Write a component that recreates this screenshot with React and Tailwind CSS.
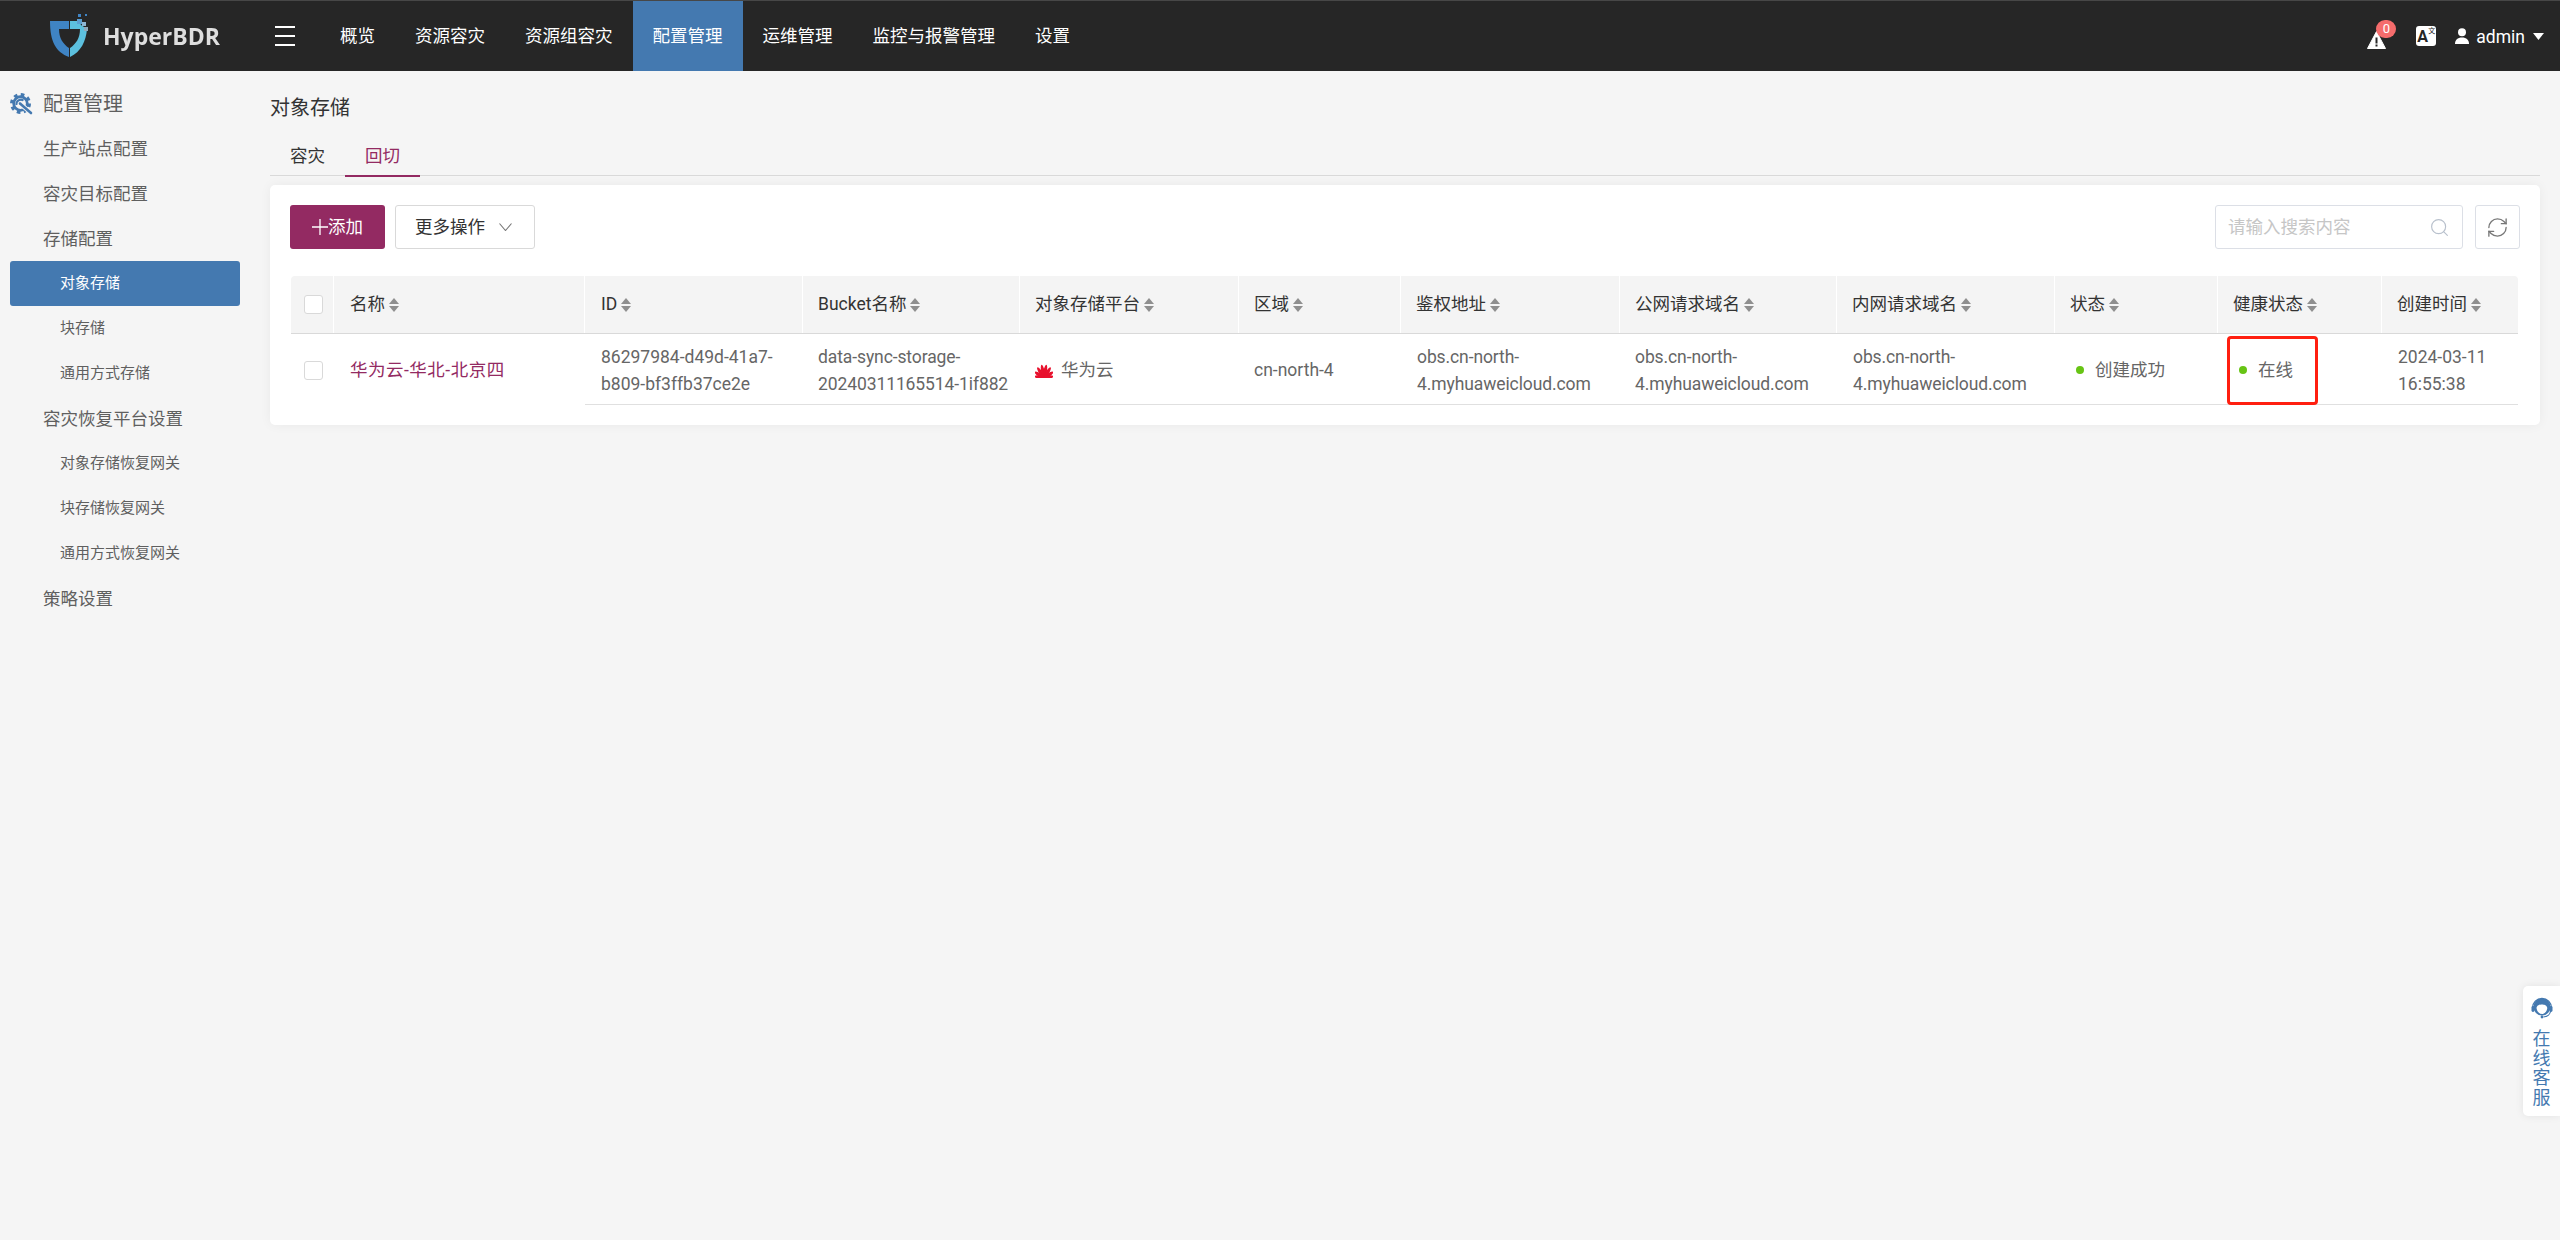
import { RefreshCw, Search } from 'lucide-react';

const navItems = ['概览', '资源容灾', '资源组容灾', '配置管理', '运维管理', '监控与报警管理', '设置'];

const sideItems = [
  { label: '生产站点配置' },
  { label: '容灾目标配置' },
  { label: '存储配置' },
  { label: '对象存储', sub: true, active: true },
  { label: '块存储', sub: true },
  { label: '通用方式存储', sub: true },
  { label: '容灾恢复平台设置' },
  { label: '对象存储恢复网关', sub: true },
  { label: '块存储恢复网关', sub: true },
  { label: '通用方式恢复网关', sub: true },
  { label: '策略设置' },
];

const columns = ['名称', 'ID', 'Bucket名称', '对象存储平台', '区域', '鉴权地址', '公网请求域名', '内网请求域名', '状态', '健康状态', '创建时间'];

const gridCols = 'grid grid-cols-[43px_251px_218px_217px_219px_162px_219px_217px_218px_163px_164px_136px]';

function SortIcon() {
  return (
    <svg width="10" height="14" viewBox="0 0 10 14" className="ml-[4px] shrink-0" fill="#8f8f8f">
      <path d="M5 0 10 6H0z" />
      <path d="M5 14 10 8H0z" />
    </svg>
  );
}

function Checkbox() {
  return <span className="block w-[19px] h-[19px] bg-white border border-[#d9d9d9] rounded-[3px]" />;
}

function Logo() {
  return (
    <svg width="42" height="44" viewBox="0 0 42 44" className="shrink-0">
      <path d="M1 7h19v8h-10c0 9 4 15 10 19v9C7 38 1 28 1 7z" fill="#3f84c4" />
      <path d="M21 43V34c6-4 10-10 10-19l-10 0v-8h9l2 4 6 4c-1 12-6 23-17 28z" fill="#5cc0de" />
      <rect x="28" y="5" width="5" height="5" fill="#5b9fd0" />
      <rect x="33" y="8" width="4" height="4" fill="#8fb7d4" />
      <rect x="35" y="13" width="4" height="4" fill="#8fa9bb" />
      <rect x="29" y="0" width="3" height="3" fill="#3f84c4" />
      <rect x="36" y="0" width="2" height="2" fill="#3f84c4" />
    </svg>
  );
}

function GearIcon() {
  return (
    <svg width="24" height="22" viewBox="0 0 24 22" className="shrink-0">
      <circle cx="10.5" cy="10.5" r="9" fill="none" stroke="#4479b0" strokeWidth="3" strokeDasharray="3.6 3.47" />
      <circle cx="10.5" cy="10.5" r="6.8" fill="none" stroke="#4479b0" strokeWidth="2.8" />
      <path d="M6.5 12a4.5 4.5 0 0 1 7-4.5" fill="none" stroke="#4479b0" strokeWidth="2" />
      <path d="M10 10.5l11 9.5" stroke="#f5f5f5" strokeWidth="4.4" />
      <path d="M10 10.5l11 9.5" stroke="#4479b0" strokeWidth="2.6" strokeLinecap="round" />
    </svg>
  );
}

function HuaweiIcon() {
  const petals = [
    [-80, 9.5],
    [-56, 11],
    [-32, 12.5],
    [-10, 13.5],
    [10, 13.5],
    [32, 12.5],
    [56, 11],
    [80, 9.5],
  ];
  return (
    <svg width="18" height="14" viewBox="0 0 18 14" className="shrink-0">
      {petals.map(([a, len]) => (
        <ellipse key={a} cx="9" cy={14 - len / 2} rx="1.7" ry={len / 2} fill="#e8112d" transform={`rotate(${a} 9 14)`} />
      ))}
    </svg>
  );
}

function HeadsetIcon() {
  return (
    <svg width="22" height="22" viewBox="0 0 22 22">
      <circle cx="11" cy="10" r="8.6" fill="#4479b0" />
      <path d="M5.5 11c.5-3 3-3.5 5.5-3.5 2 0 4.8.6 5.3 3.5-.5 3.5-2.6 6-5.3 6s-5-2.5-5.5-6z" fill="#fff" />
      <path d="M1.5 11a9.5 9.5 0 0 1 19 0" fill="none" stroke="#4479b0" strokeWidth="1.3" />
      <rect x="0.5" y="9" width="3" height="6" rx="1.4" fill="#4479b0" />
      <rect x="18.5" y="9" width="3" height="6" rx="1.4" fill="#4479b0" />
      <path d="M19.5 14c0 3-3 5.5-7 6" fill="none" stroke="#4479b0" strokeWidth="1.2" />
      <circle cx="11" cy="20" r="1.4" fill="#4479b0" />
    </svg>
  );
}

function StatusCell({ label }) {
  return (
    <div className="flex items-center pl-[21px] pt-[2px] text-[#666]">
      <span className="w-[8px] h-[8px] rounded-full bg-[#67c414] mr-[11px] shrink-0" />
      {label}
    </div>
  );
}

function App() {
  return (
    <div className="relative min-h-[1240px] bg-[#f5f5f5] text-[17.5px] [font-family:Roboto,'Noto_Sans_CJK_SC',sans-serif]">
      <header className="h-[71px] bg-[#262626] border-t border-[#474747] flex items-stretch text-white">
        <div className="w-[275px] pl-[49px] flex items-center shrink-0">
          <Logo />
          <span className="ml-[12px] text-[23px] leading-none font-bold text-[#dedede] blur-[0.5px] [font-family:'Open_Sans',sans-serif]">
            HyperBDR
          </span>
        </div>
        <div className="w-[45px] flex flex-col justify-center shrink-0">
          <span className="block w-[20px] h-[2px] bg-white" />
          <span className="block w-[20px] h-[2px] bg-white mt-[7px]" />
          <span className="block w-[20px] h-[2px] bg-white mt-[7px]" />
        </div>
        <nav className="flex">
          {navItems.map((item) => (
            <div key={item} className={`px-[20px] flex items-center ${item === '配置管理' ? 'bg-[#4479b0]' : ''}`}>
              {item}
            </div>
          ))}
        </nav>
        <div className="ml-auto flex items-center pr-[16px]">
          <div className="relative w-[20px] h-[20px] mr-[29px] mt-[10px]">
            <svg width="19" height="18" viewBox="0 0 19 18">
              <path d="M9.5 0.5 18.5 17.5H.5z" fill="#fff" stroke="#fff" strokeLinejoin="round" />
              <path d="M9.5 6.5v6" stroke="#262626" strokeWidth="2" />
              <rect x="8.5" y="13.5" width="2" height="2" fill="#262626" />
            </svg>
            <span className="absolute left-[9px] top-[-11px] w-[20px] h-[18px] rounded-full bg-[#f56c6c] text-white text-[13px] leading-[18px] text-center">
              0
            </span>
          </div>
          <div className="relative w-[20px] h-[20px] bg-white rounded-[3px] text-[#262626] mr-[19px]">
            <span className="absolute left-[1px] top-[3px] text-[16px] leading-none font-bold">A</span>
            <span className="absolute right-[1px] top-[2px] text-[7px] leading-none">文</span>
          </div>
          <svg width="14" height="16" viewBox="0 0 14 16" fill="#fff" className="mr-[7px]">
            <circle cx="7" cy="4.2" r="4" />
            <path d="M0 16c0-4 2.5-6.5 7-6.5s7 2.5 7 6.5z" />
          </svg>
          <span className="mt-[2px]">admin</span>
          <svg width="11" height="7" viewBox="0 0 11 7" fill="#fff" className="ml-[8px]">
            <path d="M0 0h11L5.5 7z" />
          </svg>
        </div>
      </header>

      <div className="flex">
        <aside className="w-[250px] shrink-0 px-[10px] pt-[10px] text-[#5f5f5f]">
          <div className="h-[45px] flex items-center text-[20px] pt-px">
            <GearIcon />
            <span className="ml-[9px]">配置管理</span>
          </div>
          {sideItems.map((item) => (
            <div
              key={item.label}
              className={`h-[45px] flex items-center rounded-[3px] ${item.sub ? 'pl-[50px] text-[15px]' : 'pl-[33px] pt-px'} ${item.active ? 'bg-[#4479b0] text-white' : ''}`}
            >
              {item.label}
            </div>
          ))}
        </aside>

        <main className="flex-1 px-[20px] pt-[22px]">
          <h1 className="text-[20px] leading-[30px] font-normal text-[#333]">对象存储</h1>
          <div className="flex mt-[14px] h-[39px] border-b border-[#d9d9d9]">
            <div className="w-[75px] flex items-center justify-center text-[#333]">容灾</div>
            <div className="w-[75px] flex items-center justify-center text-[#932a62] border-b-2 border-[#932a62] h-[40px]">回切</div>
          </div>

          <section className="mt-[9px] bg-white rounded-[5px] px-[20px] pt-[20px] pb-[20px] h-[240px] shadow-[0_0_12px_rgba(0,0,0,0.05)]">
            <div className="flex items-center h-[44px]">
              <button className="w-[95px] h-[44px] bg-[#932a62] text-white rounded-[3px] flex items-center justify-center">
                <svg width="16" height="16" viewBox="0 0 16 16" stroke="#fff" strokeWidth="1.3" className="shrink-0">
                  <path d="M0 8h16M8 0v16" />
                </svg>
                添加
              </button>
              <button className="ml-[10px] w-[140px] h-[44px] bg-white border border-[#d9d9d9] rounded-[3px] text-[#333] flex items-center pl-[19px]">
                更多操作
                <svg width="13" height="8" viewBox="0 0 13 8" fill="none" stroke="#777" strokeWidth="1.1" className="ml-[14px]">
                  <path d="M.5.5l6 7 6-7" />
                </svg>
              </button>
              <div className="ml-auto w-[248px] h-[44px] border border-[#dcdfe6] rounded-[3px] flex items-center pl-[12px] pr-[12px] text-[#c6c6c6]">
                请输入搜索内容
                <Search size={21} strokeWidth={1.3} className="ml-auto text-[#b8c0cc]" />
              </div>
              <div className="ml-[12px] w-[45px] h-[44px] border border-[#dcdfe6] rounded-[3px] flex items-center justify-center">
                <RefreshCw size={23} strokeWidth={1.4} className="text-[#777]" />
              </div>
            </div>

            <div className="mt-[27px] ml-px mr-[2px]">
              <div className={`${gridCols} h-[58px] bg-[#f4f4f4] border-b border-[#d9d9d9] rounded-t-[4px] text-[#333]`}>
                <div className="flex items-center pl-[13px] border-r border-white">
                  <Checkbox />
                </div>
                {columns.map((col, i) => (
                  <div
                    key={col}
                    className={`flex items-center ${i < 2 ? 'pl-[16px]' : 'pl-[15px]'} ${i < columns.length - 1 ? 'border-r border-white' : ''}`}
                  >
                    {col}
                    <SortIcon />
                  </div>
                ))}
              </div>

              <div className={`${gridCols} h-[71px] text-[#666] leading-[26.25px]`}>
                <div className="flex items-center pl-[13px] pt-[2px]">
                  <Checkbox />
                </div>
                <div className="flex items-center pl-[16px] pt-[1px] text-[#932a62] tracking-[0.5px]">华为云-华北-北京四</div>
                <div className="flex items-center pl-[16px] pr-[10px] pt-[3px] border-b border-[#e0e0e0]">86297984-d49d-41a7-b809-bf3ffb37ce2e</div>
                <div className="flex items-center pl-[15px] pt-[3px] tracking-[-0.1px] border-b border-[#e0e0e0]">data-sync-storage-20240311165514-1if882</div>
                <div className="flex items-center pl-[15px] pt-[3px] border-b border-[#e0e0e0]">
                  <HuaweiIcon />
                  <span className="ml-[8px]">华为云</span>
                </div>
                <div className="flex items-center pl-[15px] pt-[3px] border-b border-[#e0e0e0]">cn-north-4</div>
                <div className="flex items-center pl-[16px] pr-[10px] pt-[3px] tracking-[-0.1px] border-b border-[#e0e0e0]">obs.cn-north-4.myhuaweicloud.com</div>
                <div className="flex items-center pl-[15px] pr-[10px] pt-[3px] tracking-[-0.1px] border-b border-[#e0e0e0]">obs.cn-north-4.myhuaweicloud.com</div>
                <div className="flex items-center pl-[16px] pr-[10px] pt-[3px] tracking-[-0.1px] border-b border-[#e0e0e0]">obs.cn-north-4.myhuaweicloud.com</div>
                <div className="border-b border-[#e0e0e0] flex">
                  <StatusCell label="创建成功" />
                </div>
                <div className="relative border-b border-[#e0e0e0] flex">
                  <StatusCell label="在线" />
                  <span className="absolute left-[9px] top-[2px] w-[91px] h-[69px] border-[3px] border-[#ff1f10] rounded-[4px]" />
                </div>
                <div className="flex items-center pl-[16px] pr-[20px] pt-[3px] border-b border-[#e0e0e0]">2024-03-11 16:55:38</div>
              </div>
            </div>
          </section>
        </main>
      </div>

      <div className="absolute right-0 top-[986px] w-[37px] h-[130px] bg-white rounded-l-[5px] shadow-[0_0_8px_rgba(0,0,0,0.08)] flex flex-col items-center pt-[11px] text-[18px] text-[#4479b0] leading-[19.5px]">
        <HeadsetIcon />
        <span className="mt-[10px]">在</span>
        <span>线</span>
        <span>客</span>
        <span>服</span>
      </div>
    </div>
  );
}

export default App;
